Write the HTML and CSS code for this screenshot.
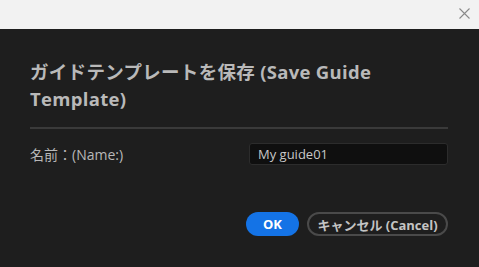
FILE: index.html
```html
<!DOCTYPE html>
<html lang="ja">
<head>
    <meta charset="UTF-8">
    <meta name="viewport" content="width=device-width, initial-scale=1.0">
    <title>Save Guide Template</title>
    <link rel="stylesheet" href="styles.css">
</head>
<body>

    <div class="window">
        <div class="title-bar">
            <button class="close-btn" aria-label="close">
                <svg width="11" height="11" viewBox="0 0 11 11">
                    <path d="M0.5 0.5 L10.5 10.5 M10.5 0.5 L0.5 10.5" stroke="#8a8a8a" stroke-width="1.1" fill="none"/>
                </svg>
            </button>
        </div>
        <div class="dialog">
            <h1 class="dialog-title">ガイドテンプレートを保存 (Save Guide Template)</h1>
            <div class="divider"></div>
            <div class="field-row">
                <label for="guide-name">名前：(Name:)</label>
                <input type="text" id="guide-name" value="My guide01">
            </div>
            <div class="button-row">
                <button class="btn btn-ok">OK</button>
                <button class="btn btn-cancel">キャンセル (Cancel)</button>
            </div>
        </div>
    </div>

</body>
</html>
```

FILE: styles.css
```css
 body {
     margin: 0;
     padding: 0;
     width: 479px;
     height: 267px;
     overflow: hidden;
     font-family: "Open Sans", "Noto Sans CJK JP", sans-serif;
     background-color: #1e1e1e;
 }

 .window {
     height: 100%;
     display: flex;
     flex-direction: column;
 }

 .title-bar {
     height: 29px;
     background-color: #f2f2f2;
     display: flex;
     justify-content: flex-end;
     align-items: center;
 }

 .close-btn {
     border: none;
     background: none;
     padding: 0;
     width: 11px;
     height: 11px;
     margin-right: 9px;
     margin-top: -3px;
     display: flex;
 }

 .dialog {
     flex: 1;
     background-color: #1e1e1e;
     padding: 29px 31px 0 30px;
 }

 .dialog-title {
     margin: 0;
     font-size: 18.5px;
     letter-spacing: 0.3px;
     line-height: 27px;
     font-weight: 700;
     color: #b9b9b9;
     padding-right: 60px;
 }

 .divider {
     height: 2px;
     background-color: #3a3a3a;
     margin-top: 15px;
 }

 .field-row {
     display: flex;
     justify-content: space-between;
     align-items: center;
     margin-top: 14px;
 }

 .field-row label {
     font-size: 14px;
     color: #b8b8b8;
 }

 #guide-name {
     width: 199px;
     height: 22px;
     box-sizing: border-box;
     padding: 0 8px;
     font-family: inherit;
     font-size: 13px;
     color: #c8c8c8;
     background-color: #0f0f0f;
     border: 1px solid #2c2c2c;
     border-radius: 3px;
     outline: none;
 }

 .button-row {
     display: flex;
     justify-content: flex-end;
     gap: 8px;
     margin-top: 47px;
 }

 .btn {
     height: 24px;
     box-sizing: border-box;
     border-radius: 12px;
     font-family: inherit;
     font-size: 13px;
     font-weight: 700;
     cursor: pointer;
     display: flex;
     align-items: center;
     justify-content: center;
 }

 .btn-ok {
     width: 53px;
     border: none;
     background-color: #1473e6;
     color: #ffffff;
 }

 .btn-cancel {
     width: 141px;
     border: 2px solid #4a4a4a;
     background-color: transparent;
     color: #c4c4c4;
 }
```
